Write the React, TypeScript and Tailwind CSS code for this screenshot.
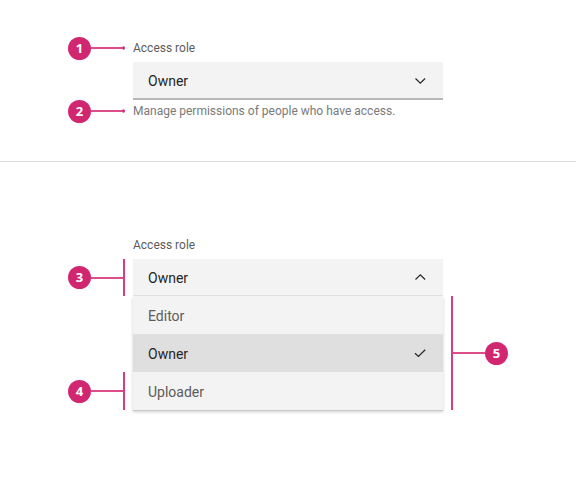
import type { ReactNode } from "react";

const roles = ["Editor", "Owner", "Uploader"];

function Badge({ children }: { children: ReactNode }) {
  return (
    <span className="flex size-[23px] shrink-0 items-center justify-center rounded-full bg-[#d12771] font-['Noto_Sans',sans-serif] text-[13px] leading-none font-bold text-white">
      {children}
    </span>
  );
}

function Pointer({ n }: { n: number }) {
  return (
    <div className="flex h-[22px] items-center pr-2">
      <Badge>{n}</Badge>
      <span className="h-0.5 grow bg-[#dd4d8b]" />
      <svg viewBox="0 0 3 4" aria-hidden="true" className="h-1 w-[3px]">
        <ellipse cx="1.500" cy="2" rx="1.500" ry="1.800" fill="#d12771" />
      </svg>
    </div>
  );
}

function Bracket({ n, side = "left" }: { n: number; side?: "left" | "right" }) {
  return (
    <div className={side === "left" ? "flex h-full items-center pr-2" : "flex h-full flex-row-reverse items-center pl-2"}>
      <Badge>{n}</Badge>
      <span className="h-0.5 grow bg-[#dd4d8b]" />
      <span className="w-0.5 self-stretch bg-[#d93d80]" />
    </div>
  );
}

function Icon({ d, className }: { d: string; className?: string }) {
  return (
    <svg
      viewBox="0 0 16 16"
      fill="none"
      stroke="#262626"
      strokeWidth="1.200"
      aria-hidden="true"
      className={`size-4 ${className ?? ""}`}
    >
      <path d={d} />
    </svg>
  );
}

const chevronDown = "M3.500 5.500 8.300 10.200 13.100 5.500";
const chevronUp = "M3.500 10.500 8.300 5.800 13.100 10.500";
const check = "M3 8.300 6.400 11.500 13.200 4.800";

export default function App() {
  return (
    <main className="bg-white font-[Roboto,sans-serif] text-[#262626]">
      <section className="grid grid-cols-[65px_1fr_65px] border-b border-[#dcdcdc] px-[68px] pt-[37px] pb-[39px]">
        <Pointer n={1} />
        <label htmlFor="role" className="col-span-2 text-[12px] leading-[22px] text-[#5c5c5c]">
          Access role
        </label>

        <div className="relative col-start-2 mt-[3px]">
          <select
            id="role"
            defaultValue="Owner"
            aria-describedby="role-help"
            className="block h-[38px] w-full appearance-none rounded-none border-b-2 border-[#b8b8b8] bg-[#f3f3f3] px-[15px] pt-0.5 text-[14px] outline-none"
          >
            {roles.map((role) => (
              <option key={role}>{role}</option>
            ))}
          </select>
          <Icon d={chevronDown} className="pointer-events-none absolute top-[11px] right-[15px]" />
        </div>

        <div className="col-start-1">
          <Pointer n={2} />
        </div>
        <p id="role-help" className="col-span-2 text-[12px] leading-[22px] whitespace-nowrap text-[#7a7a7a]">
          Manage permissions of people who have access.
        </p>
      </section>

      <section className="grid grid-cols-[65px_1fr_65px] grid-rows-[25px_37px_38px_38px_38px] px-[68px] pt-[72px] pb-[76px]">
        <label htmlFor="open-role" className="col-start-2 text-[12px] leading-[22px] text-[#5c5c5c]">
          Access role
        </label>

        <div className="col-start-1 row-start-2">
          <Bracket n={3} />
        </div>
        <button
          id="open-role"
          type="button"
          role="combobox"
          aria-expanded="true"
          aria-controls="role-list"
          className="col-start-2 row-start-2 flex items-center justify-between border-b border-[#e0e0e0] bg-[#f3f3f3] px-[15px] text-[14px]"
        >
          <span className="pt-0.5">Owner</span>
          <Icon d={chevronUp} />
        </button>

        <ul
          id="role-list"
          role="listbox"
          className="col-start-2 row-span-3 row-start-3 grid grid-rows-3 bg-[#f3f3f3] text-[14px] text-[#5c5c5c] shadow-[0_1px_0_#c8c8c8,0_2px_3px_#d0d0d0]"
        >
          {roles.map((role) => (
            <li
              key={role}
              role="option"
              aria-selected={role === "Owner"}
              className="flex items-center justify-between px-[15px] aria-selected:bg-[#dfdfdf] aria-selected:text-[#262626]"
            >
              <span className="pt-0.5">{role}</span>
              {role === "Owner" && <Icon d={check} />}
            </li>
          ))}
        </ul>

        <div className="col-start-1 row-start-5">
          <Bracket n={4} />
        </div>
        <div className="col-start-3 row-span-3 row-start-3">
          <Bracket n={5} side="right" />
        </div>
      </section>
    </main>
  );
}
